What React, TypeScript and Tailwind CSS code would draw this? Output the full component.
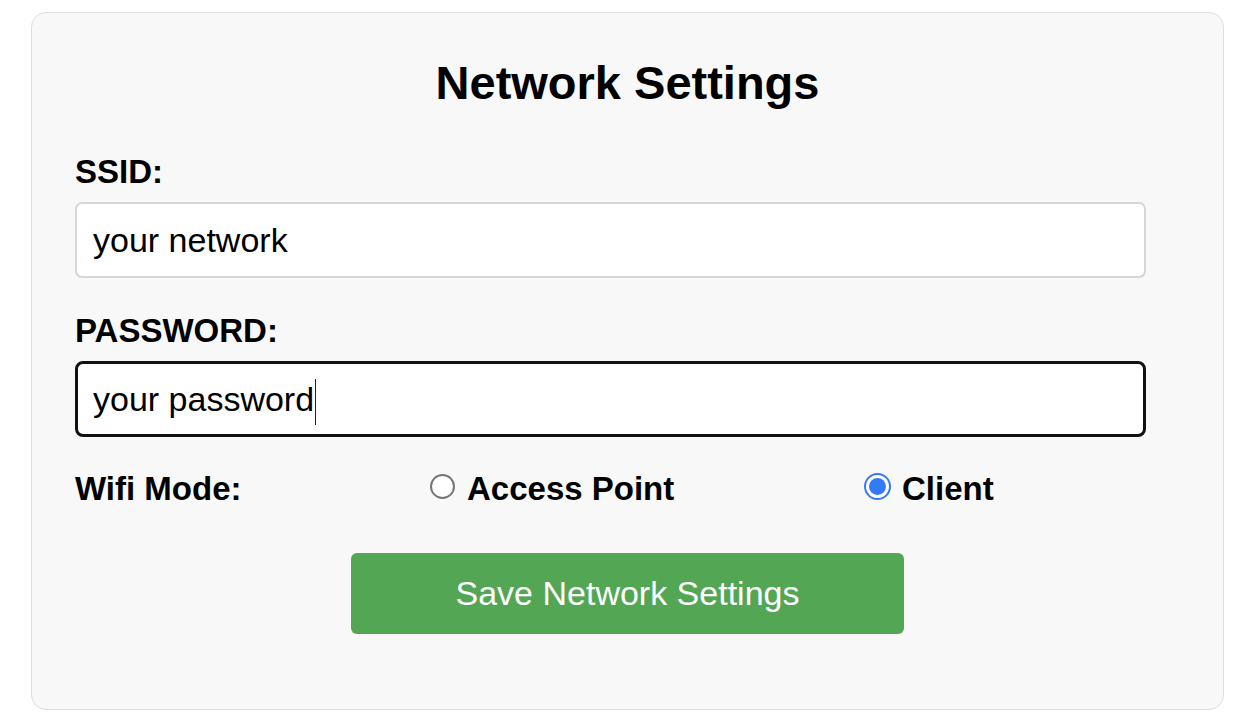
import React from "react";

export default function App() {
  return (
    <div
      className="w-[1256px] h-[726px] bg-white overflow-hidden pt-[12px] pl-[31px]"
      style={{ fontFamily: '"Liberation Sans", Arial, Helvetica, sans-serif' }}
    >
      <div className="w-[1193px] h-[698px] border border-[#dedede] rounded-[15px] bg-[#f8f8f8] px-[43px] pt-[43px] text-black">
        <h2 className="text-[47px] leading-[54px] font-bold text-center">Network Settings</h2>

        <div className="mt-[43px] text-[33px] leading-[38px] font-bold">SSID:</div>
        <div className="mt-[11px] w-[1071px] h-[76px] bg-white border-2 border-[#d6d6d6] rounded-[7px] flex items-center pl-[16px] text-[34px]">
          your network
        </div>

        <div className="mt-[34px] text-[33px] leading-[38px] font-bold">PASSWORD:</div>
        <div className="mt-[11px] w-[1071px] h-[76px] bg-white border-[3px] border-[#111] rounded-[8px] flex items-center pl-[15px] text-[34px]">
          <span>your password</span>
          <span className="inline-block w-[1px] h-[46px] bg-[#222] ml-[1px] mt-[6px]"></span>
        </div>

        <div className="mt-[33px] flex items-start text-[33px] leading-[38px] font-bold">
          <div className="w-[355px]">Wifi Mode:</div>
          <div className="w-[434px] flex items-start">
            <span className="mt-[4px] w-[25px] h-[25px] rounded-full border-2 border-[#767676] bg-white shrink-0"></span>
            <span className="ml-[12px]">Access Point</span>
          </div>
          <div className="flex items-start">
            <span className="mt-[3px] w-[27px] h-[27px] rounded-full border-2 border-[#3479f6] bg-white shrink-0 flex items-center justify-center">
              <span className="w-[17px] h-[17px] rounded-full bg-[#3479f6]"></span>
            </span>
            <span className="ml-[11px]">Client</span>
          </div>
        </div>

        <div className="mt-[45px] flex justify-center">
          <div className="w-[553px] h-[81px] bg-[#53a653] rounded-[6px] flex items-center justify-center text-white text-[34px]">
            Save Network Settings
          </div>
        </div>
      </div>
    </div>
  );
}
